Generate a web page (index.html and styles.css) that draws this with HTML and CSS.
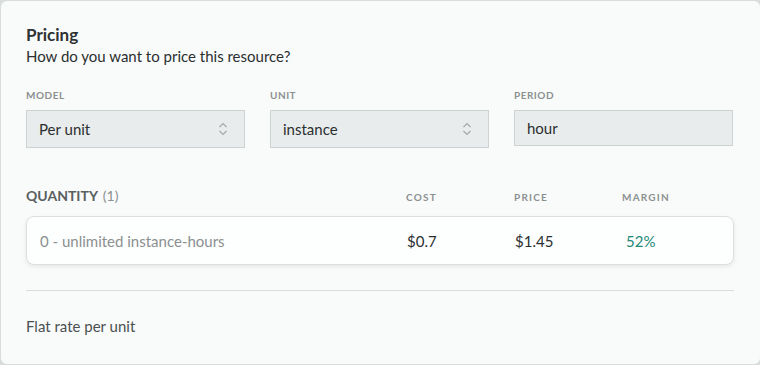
FILE: index.html
```html
<!DOCTYPE html>
<html lang="en">
<head>
  <meta charset="UTF-8">
  <meta name="viewport" content="width=device-width, initial-scale=1.0">
  <title>Pricing</title>
  <link rel="stylesheet" href="styles.css">
</head>
<body>
  <div class="card">
    <h2 class="title">Pricing</h2>
    <p class="subtitle">How do you want to price this resource?</p>

    <div class="fields">
      <div class="field">
        <label>Model</label>
        <div class="select">
          <span>Per unit</span>
          <svg class="chevrons" width="10" height="16" viewBox="0 0 10 16"><path d="M1.5 6 L5 2.5 L8.5 6 M1.5 10 L5 13.5 L8.5 10" fill="none" stroke="#a4a9a9" stroke-width="1.2"/></svg>
        </div>
      </div>
      <div class="field">
        <label>Unit</label>
        <div class="select">
          <span>instance</span>
          <svg class="chevrons" width="10" height="16" viewBox="0 0 10 16"><path d="M1.5 6 L5 2.5 L8.5 6 M1.5 10 L5 13.5 L8.5 10" fill="none" stroke="#a4a9a9" stroke-width="1.2"/></svg>
        </div>
      </div>
      <div class="field">
        <label>Period</label>
        <div class="select input">
          <span>hour</span>
        </div>
      </div>
    </div>

    <div class="tiers-head">
      <div class="qty">QUANTITY <span class="count">(1)</span></div>
      <div class="col-label">Cost</div>
      <div class="col-label">Price</div>
      <div class="col-label">Margin</div>
    </div>
    <div class="tier">
      <div class="range">0 - unlimited instance-hours</div>
      <div>$0.7</div>
      <div>$1.45</div>
      <div class="margin">52%</div>
    </div>

    <hr class="divider">
    <p class="note">Flat rate per unit</p>
  </div>
</body>
</html>
```

FILE: styles.css
```css
body {
  margin: 0;
  background-color: #d9dcdc;
  font-family: Lato, "Noto Sans", sans-serif;
  color: #2b2f2f;
}
.card {
  box-sizing: border-box;
  width: 759px;
  height: 363px;
  margin: 1px 0 0 1px;
  padding: 24px 26px 0 25px;
  background-color: #f9fbfb;
  border-radius: 6px;
}
.title {
  margin: 0;
  font-size: 17px;
  font-weight: 700;
  line-height: 20px;
  color: #2e3232;
}
.subtitle {
  margin: 2px 0 0;
  font-size: 15px;
  line-height: 18px;
}
.fields {
  display: grid;
  grid-template-columns: 219px 219px 219px;
  column-gap: 25px;
  margin-top: 24px;
}
.field label {
  display: block;
  font-size: 10px;
  font-weight: 700;
  letter-spacing: 0.5px;
  text-transform: uppercase;
  color: #8b9090;
  line-height: 12px;
  margin-bottom: 9px;
}
.select {
  box-sizing: border-box;
  height: 38px;
  display: flex;
  align-items: center;
  justify-content: space-between;
  padding: 0 16px 0 12px;
  background-color: #e9ecec;
  border: 1px solid #cdd2d2;
  font-size: 15px;
  color: #2b2f2f;
}
.select.input {
  height: 36px;
}
.chevrons {
  display: block;
}
.tiers-head {
  display: grid;
  grid-template-columns: 380px 108px 108px 1fr;
  align-items: baseline;
  margin-top: 39px;
  height: 20px;
}
.qty {
  font-size: 14px;
  font-weight: 700;
  color: #5a5f5f;
}
.count {
  margin-left: 2px;
  font-weight: 400;
  color: #8b9090;
}
.col-label {
  font-size: 10px;
  font-weight: 700;
  letter-spacing: 1.2px;
  text-transform: uppercase;
  color: #8b9090;
}
.tier {
  box-sizing: border-box;
  display: grid;
  grid-template-columns: 367px 108px 108px 1fr;
  align-items: center;
  height: 49px;
  margin-top: 9px;
  padding: 0 13px;
  background-color: #fdfefe;
  border: 1px solid #dcdfdf;
  border-radius: 8px;
  box-shadow: 0 2px 4px rgba(0, 0, 0, 0.08);
  font-size: 15px;
  color: #2b2f2f;
}
.range {
  color: #8b9090;
}
.margin {
  color: #1d8a78;
  padding-left: 3px;
}
.divider {
  margin: 25px 0 0;
  border: none;
  border-top: 1px solid #d9dcdc;
}
.note {
  margin: 26px 0 0;
  font-size: 15px;
  color: #4b5050;
}
```
